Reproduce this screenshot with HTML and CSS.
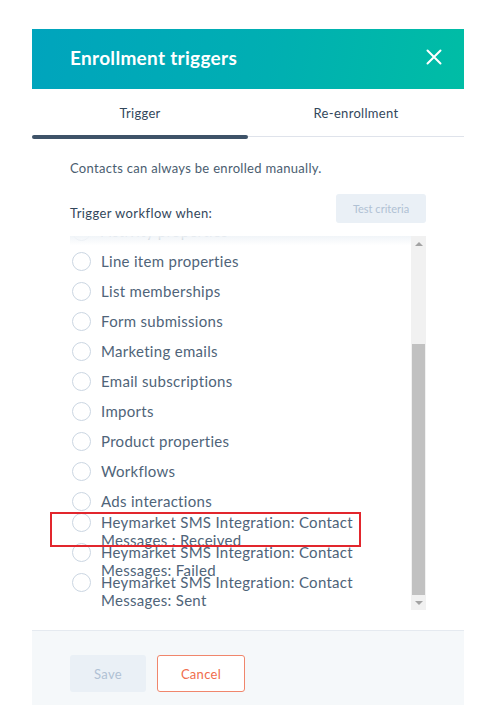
FILE: index.html
```html
<!DOCTYPE html>
<html lang="en">
<head>
    <meta charset="UTF-8">
    <meta name="viewport" content="width=device-width, initial-scale=1.0">
    <title>Enrollment triggers</title>
    <link rel="stylesheet" href="styles.css">
</head>
<body>
    <div class="panel">
        <div class="panel-header">
            <h2 class="panel-title">Enrollment triggers</h2>
            <button class="close-btn" aria-label="Close">
                <svg width="16" height="16" viewBox="0 0 16 16">
                    <path d="M1.5 1.5 L14.5 14.5 M14.5 1.5 L1.5 14.5" stroke="#fff" stroke-width="2" stroke-linecap="round" fill="none"/>
                </svg>
            </button>
        </div>

        <div class="tabs">
            <div class="tab active">Trigger</div>
            <div class="tab">Re-enrollment</div>
        </div>

        <div class="panel-body">
            <p class="note">Contacts can always be enrolled manually.</p>

            <div class="trigger-row">
                <span class="trigger-label">Trigger workflow when:</span>
                <button class="test-btn" disabled>Test criteria</button>
            </div>

            <div class="list-box">
                <div class="list-scroll">
                    <ul class="options">
                        <li class="option"><label><span class="radio"></span><span class="option-text">Activity properties</span></label></li>
                        <li class="option"><label><span class="radio"></span><span class="option-text">Line item properties</span></label></li>
                        <li class="option"><label><span class="radio"></span><span class="option-text">List memberships</span></label></li>
                        <li class="option"><label><span class="radio"></span><span class="option-text">Form submissions</span></label></li>
                        <li class="option"><label><span class="radio"></span><span class="option-text">Marketing emails</span></label></li>
                        <li class="option"><label><span class="radio"></span><span class="option-text">Email subscriptions</span></label></li>
                        <li class="option"><label><span class="radio"></span><span class="option-text">Imports</span></label></li>
                        <li class="option"><label><span class="radio"></span><span class="option-text">Product properties</span></label></li>
                        <li class="option"><label><span class="radio"></span><span class="option-text">Workflows</span></label></li>
                        <li class="option"><label><span class="radio"></span><span class="option-text">Ads interactions</span></label></li>
                        <li class="option"><label><span class="radio"></span><span class="option-text">Heymarket SMS Integration: Contact<br>Messages : Received</span></label></li>
                        <li class="option"><label><span class="radio"></span><span class="option-text">Heymarket SMS Integration: Contact<br>Messages: Failed</span></label></li>
                        <li class="option"><label><span class="radio"></span><span class="option-text">Heymarket SMS Integration: Contact<br>Messages: Sent</span></label></li>
                    </ul>
                    <div class="fade-top"></div>
                </div>
                <div class="scrollbar">
                    <span class="arrow up"></span>
                    <div class="track">
                        <div class="thumb"></div>
                    </div>
                    <span class="arrow down"></span>
                </div>
                <div class="highlight-box"></div>
            </div>
        </div>

        <div class="panel-footer">
            <button class="btn btn-save" disabled>Save</button>
            <button class="btn btn-cancel">Cancel</button>
        </div>
    </div>
</body>
</html>
```

FILE: styles.css
```css
body {
    margin: 0;
    background-color: #fff;
    font-family: Lato, "Open Sans", sans-serif;
    color: #33475b;
    letter-spacing: 0.3px;
}

.panel {
    width: 432px;
    margin: 29px 0 0 32px;
    background-color: #fff;
}

.panel-header {
    height: 60px;
    display: flex;
    align-items: center;
    justify-content: space-between;
    padding: 0 22px 4px 38px;
    box-sizing: border-box;
    background: linear-gradient(100deg, #00a4bd 0%, #00afb2 55%, #00bda5 100%);
}

.panel-title {
    margin: 0;
    color: #fff;
    font-size: 19px;
    font-weight: 700;
}

.close-btn {
    background: none;
    border: none;
    padding: 0;
    width: 16px;
    height: 16px;
    cursor: pointer;
}

.tabs {
    display: flex;
    height: 47px;
    border-bottom: 1px solid #dfe3eb;
    margin-bottom: 1px;
}

.tab {
    flex: 1;
    display: flex;
    align-items: center;
    justify-content: center;
    font-size: 13px;
    position: relative;
}

.tab.active::after {
    content: "";
    position: absolute;
    left: 0;
    right: 0;
    bottom: -3px;
    height: 4px;
    border-radius: 2px;
    background-color: #3e5368;
}

.panel-body {
    padding: 0 38px;
}

.note {
    margin: 0;
    padding-top: 22px;
    font-size: 13px;
    line-height: 16px;
    color: #4a5d70;
}

.trigger-row {
    display: flex;
    justify-content: space-between;
    align-items: center;
    margin-top: 18px;
}

.trigger-label {
    font-size: 13px;
    letter-spacing: 0.4px;
    padding-top: 8px;
}

.test-btn {
    width: 90px;
    height: 29px;
    border: none;
    border-radius: 3px;
    background-color: #eaf0f6;
    color: #b0c1d4;
    font-family: inherit;
    font-size: 11px;
}

.list-box {
    display: flex;
    height: 374px;
    margin-top: 13px;
    position: relative;
}

.list-scroll {
    flex: 1;
    overflow: hidden;
    position: relative;
}

.options {
    list-style: none;
    margin: -20px 0 0 0;
    padding: 0 0 0 2px;
}

.option {
    height: 30px;
    display: flex;
    align-items: center;
}

.option label {
    display: flex;
    align-items: flex-start;
    gap: 10px;
}

.radio {
    width: 17px;
    height: 17px;
    border: 1px solid #cbd6e2;
    border-radius: 50%;
    background-color: #fff;
    flex-shrink: 0;
}

.option-text {
    font-size: 15px;
    line-height: 18px;
    color: #4f6479;
}

.highlight-box {
    position: absolute;
    left: -20px;
    top: 276px;
    width: 307px;
    height: 31px;
    border: 2px solid #e2262d;
}

.fade-top {
    position: absolute;
    left: 0;
    right: 0;
    top: 0;
    height: 16px;
    background: linear-gradient(rgba(240, 244, 248, 0.95), rgba(255, 255, 255, 0.6) 60%, rgba(255, 255, 255, 0));
}

.scrollbar {
    width: 15px;
    display: flex;
    flex-direction: column;
    background-color: #f1f1f1;
}

.arrow {
    height: 15px;
    display: flex;
    align-items: center;
    justify-content: center;
}

.arrow::before {
    content: "";
    border-left: 4px solid transparent;
    border-right: 4px solid transparent;
}

.arrow.up::before {
    border-bottom: 4px solid #a3a3a3;
}

.arrow.down::before {
    border-top: 4px solid #a3a3a3;
}

.track {
    flex: 1;
    display: flex;
    flex-direction: column;
    justify-content: flex-end;
}

.thumb {
    height: 251px;
    margin: 0 1px;
    background-color: #c1c1c1;
}

.panel-footer {
    margin-top: 20px;
    height: 75px;
    box-sizing: border-box;
    border-top: 1px solid #e5eaf0;
    background-color: #f5f8fa;
    display: flex;
    align-items: flex-start;
    gap: 11px;
    padding: 24px 38px 0;
}

.btn {
    height: 37px;
    border-radius: 3px;
    font-family: inherit;
    font-size: 13px;
    letter-spacing: 0.3px;
}

.btn-save {
    width: 76px;
    border: none;
    background-color: #eaf0f6;
    color: #b0c1d4;
}

.btn-cancel {
    width: 88px;
    border: 1px solid #f0866c;
    background-color: #fff;
    color: #f06d4c;
    cursor: pointer;
}
```
